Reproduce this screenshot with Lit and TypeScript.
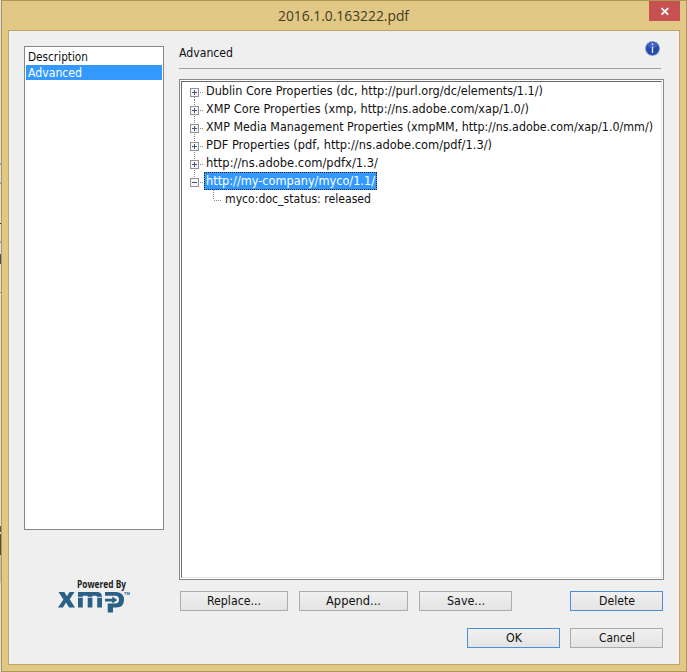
import { LitElement, html, css, svg } from "lit";
import { customElement, property } from "lit/decorators.js";
import { classMap } from "lit/directives/class-map.js";
import { styleMap } from "lit/directives/style-map.js";

interface TreeItem {
  label: string;
  width: number;
  open?: boolean;
  child?: boolean;
  selected?: boolean;
}

const TREE: TreeItem[] = [
  { label: "Dublin Core Properties (dc, http://purl.org/dc/elements/1.1/)", width: 337 },
  { label: "XMP Core Properties (xmp, http://ns.adobe.com/xap/1.0/)", width: 323 },
  { label: "XMP Media Management Properties (xmpMM, http://ns.adobe.com/xap/1.0/mm/)", width: 447 },
  { label: "PDF Properties (pdf, http://ns.adobe.com/pdf/1.3/)", width: 286 },
  { label: "http://ns.adobe.com/pdfx/1.3/", width: 172 },
  { label: "http://my-company/myco/1.1/", width: 169, open: true, selected: true },
  { label: "myco:doc_status: released", width: 146, child: true },
];

/** One line of text set to an exact advance width. */
@customElement("fit-text")
class FitText extends LitElement {
  @property() text = "";
  @property({ type: Number }) width = 0;
  static styles = css`
    :host { display: block; flex: none; }
    svg { display: block; overflow: visible; height: 18px; }
    text { fill: currentColor; }
  `;
  render() {
    return html`<svg width=${this.width} height="18">${svg`<text x="0" y="13" textLength=${this.width} lengthAdjust="spacingAndGlyphs">${this.text}</text>`}</svg>`;
  }
}

@customElement("push-button")
class PushButton extends LitElement {
  @property() label = "";
  @property({ type: Number }) textWidth = 0;
  static styles = css`
    :host { display: flex; box-sizing: border-box; height: 20px; border: 1px solid #acacac; align-items: center; justify-content: center; background: linear-gradient(#f0f0f0, #e4e4e4); }
    :host([primary]) { border-color: #4a90d9; }
  `;
  render() {
    return html`<fit-text .text=${this.label} .width=${this.textWidth}></fit-text>`;
  }
}

@customElement("app-root")
class AppRoot extends LitElement {
  static styles = css`
    :host { display: block; position: relative; width: 687px; height: 672px; overflow: hidden; background: #dfdfe0; color: #111; font: 12px "DejaVu Sans Condensed", "DejaVu Sans", sans-serif; }
    .behind { position: absolute; left: 0; width: 1px; }
    .window { margin-left: 1px; box-sizing: border-box; width: 686px; height: 672px; border: 1px solid #ad9656; background: #e1c885; padding: 0 6px 6px; display: flex; flex-direction: column; }
    .title { height: 29px; flex: none; display: flex; align-items: center; justify-content: center; color: #443b23; font: 15px "Open Sans", "Noto Sans", sans-serif; }
    .title fit-text { margin: 2px 2px 0 0; }
    .close { position: absolute; left: 649px; top: 1px; width: 31px; height: 20px; background: #c75050; }
    .close svg { display: block; }
    .body { flex: 1; min-height: 0; border: 1px solid #b9a56e; background: #efefef; display: flex; padding: 15px 15px 0; }
    .side { width: 140px; display: flex; flex-direction: column; }
    .list { box-sizing: border-box; width: 140px; height: 484px; border: 1px solid #828790; background: #fff; padding: 2px 1px; }
    .row { height: 15px; display: flex; align-items: center; padding-left: 2px; }
    .row:first-child { height: 16px; }
    .row.sel { background: #3399ff; color: #fff; }
    .logo { margin: 46px 0 0 30px; display: block; color: #202020; }
    .powered { font: bold 10px "Open Sans", sans-serif; }
    .tm { font: bold 4px "Liberation Sans", sans-serif; fill: #2a6086; }
    .main { margin-left: 15px; width: 485px; display: flex; flex-direction: column; }
    .head { height: 23px; width: 482px; box-sizing: border-box; border-bottom: 1px solid #a0a0a0; display: flex; justify-content: space-between; }
    .head fit-text { margin-top: -2px; }
    .head svg { margin: -7px 0 0; }
    .outer { margin-top: 10px; box-sizing: border-box; width: 485px; height: 501px; border: 1px solid #828790; background: #fff; padding: 1px; }
    .tree { box-sizing: border-box; height: 100%; border: 1px solid #e3e3e3; border-top-color: #696969; border-left-color: #696969; padding: 0 0 0 8px; }
    .node { height: 18px; display: flex; align-items: center; }
    .label { display: flex; align-items: center; height: 18px; box-sizing: border-box; padding: 0 1px; border: 1px solid transparent; }
    .label.selected { background: #3399ff; color: #fff; border: 1px dotted #222; }
    .buttons { display: flex; margin: 11px 0 0 1px; }
    .bottom { display: flex; justify-content: flex-end; gap: 10px; margin-top: 17px; width: 484px; }
  `;

  private glyph(item: TreeItem, first: boolean) {
    if (item.child) {
      return html`<svg width="33" height="18" shape-rendering="crispEdges"><path d="M23.5 0V10M24 10.5H32" fill="none" stroke="#888" stroke-dasharray="1 1"/></svg>`;
    }
    return html`<svg width="14" height="18" shape-rendering="crispEdges">
      <path d=${item.open ? "M4.5 0V6M10 10.5H13" : first ? "M4.5 15V18M10 10.5H13" : "M4.5 0V18M10 10.5H13"} stroke="#888" stroke-dasharray="1 1"/>
      <rect x="0.5" y="6.5" width="8" height="8" fill="#f6f6f6" stroke="#919191"/>
      <path d=${item.open ? "M2 10.5H7" : "M2 10.5H7M4.5 8V13"} stroke="#41547f"/>
    </svg>`;
  }

  render() {
    const marks = [[163, 2, "#9aa3a8"], [182, 2, "#9aa3a8"], [223, 1, "#333"], [241, 2, "#9aa3a8"], [254, 10, "#4b5364"], [292, 1, "#999"], [526, 6, "#555"], [534, 21, "#514c44"], [555, 28, "#c3c1bc"]];
    return html`
      <div class="window">
        <div class="title"><fit-text text="2016.1.0.163222.pdf" width="131"></fit-text></div>
        <div class="body">
          <div class="side">
            <div class="list">
              <div class="row"><fit-text text="Description" width="60"></fit-text></div>
              <div class="row sel"><fit-text text="Advanced" width="54"></fit-text></div>
            </div>
            <svg class="logo" width="85" height="40">
              <text class="powered" x="23" y="12" textLength="49" lengthAdjust="spacingAndGlyphs" fill="currentColor">Powered By</text>
              <g fill="#2a6086">
                <path d="M4.5 16H10.3L13 20.3L15.6 16H20.5L15.7 23.2L21 31.5H15.1L12 26.6L9 31.5H4L9.4 23.5Z"/>
                <path d="M24 16H43Q48 16 48 21V31.5H43.2V21.5Q43.2 19.7 41.5 19.7H38.4V31.5H33.7V19.7H28.8V31.5H24Z"/>
                <path fill-rule="evenodd" d="M51 16H62.5Q70 16.5 70 23.7Q70 31.5 62 31.5H59V36.5H53.7V27.5H61Q65 27.5 65 23.7Q65 20 61.5 19.7H51Z"/>
                <path d="M51 22.7H58.3V20.5L63.3 24L58.3 27.5V25.4H51Z"/>
              </g>
              <path d="M23 21.3H49" stroke="#efefef" stroke-width="0.9"/>
              <text class="tm" x="70" y="19">TM</text>
            </svg>
          </div>
          <div class="main">
            <div class="head">
              <fit-text text="Advanced" width="54"></fit-text>
              <svg width="18" height="18">
                <circle cx="9.5" cy="9.5" r="6.9" fill="#2448ac" stroke="#8093ca" stroke-width="1.2" stroke-dasharray="2 1.2"/>
                <ellipse cx="9.5" cy="6.2" rx="5" ry="3" fill="#3e62c4"/>
                <path d="M9.5 7.5V14" stroke="#e3eafa" stroke-width="1.3"/>
                <circle cx="9.5" cy="5.2" r="0.9" fill="#e3eafa"/>
              </svg>
            </div>
            <div class="outer"><div class="tree">
              ${TREE.map((item, i) => html`<div class="node">${this.glyph(item, i === 0)}
                <div class=${classMap({ label: true, selected: !!item.selected })} style=${styleMap({ width: `${item.width + (item.selected ? 4 : 0)}px` })}>
                  <fit-text .text=${item.label} .width=${item.width}></fit-text>
                </div></div>`)}
            </div></div>
            <div class="buttons">
              <push-button style="width:108px" label="Replace..." .textWidth=${54}></push-button>
              <push-button style="width:109px;margin-left:11px" label="Append..." .textWidth=${55}></push-button>
              <push-button style="width:93px;margin-left:11px" label="Save..." .textWidth=${38}></push-button>
              <push-button primary style="width:93px;margin-left:58px" label="Delete" .textWidth=${36}></push-button>
            </div>
            <div class="bottom">
              <push-button primary style="width:93px" label="OK" .textWidth=${16}></push-button>
              <push-button style="width:93px" label="Cancel" .textWidth=${36}></push-button>
            </div>
          </div>
        </div>
      </div>
      <div class="close"><svg width="31" height="20"><path d="M12.5 7.2L19.2 13.6M19.2 7.2L12.5 13.6" stroke="#fff" stroke-width="1.8"/></svg></div>
      ${marks.map(([y, h, c]) => html`<div class="behind" style=${styleMap({ top: `${y}px`, height: `${h}px`, background: `${c}` })}></div>`)}
    `;
  }
}
